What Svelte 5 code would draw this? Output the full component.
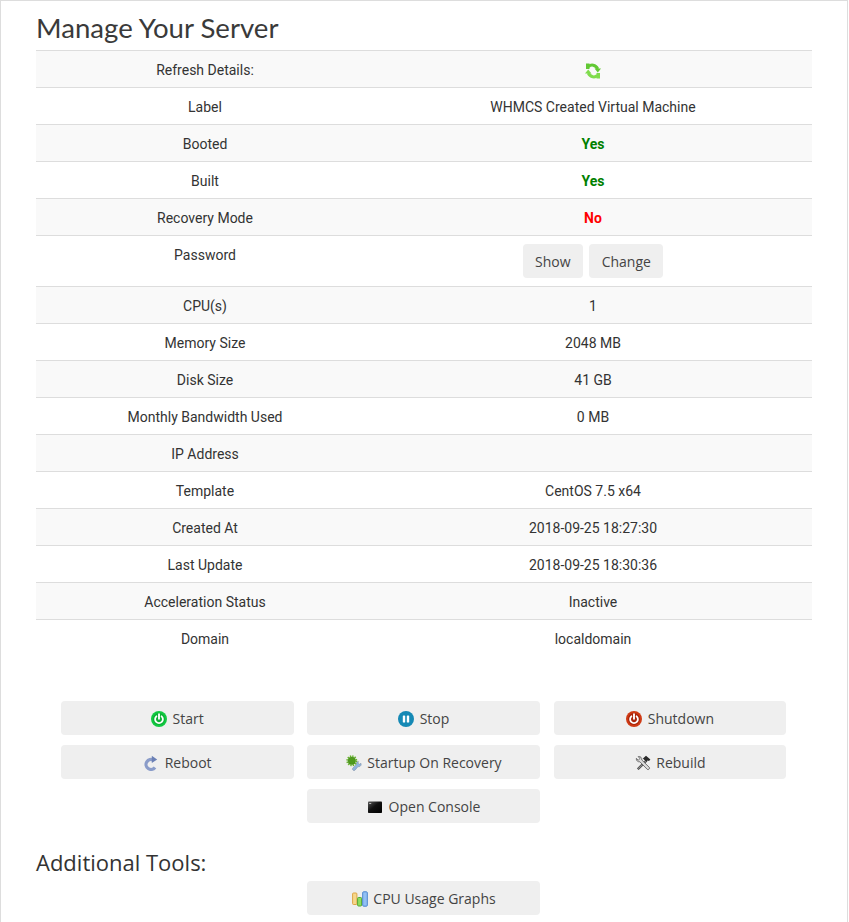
<script>
  const rows = [
    { label: 'Refresh Details:', icon: true },
    { label: 'Label', value: 'WHMCS Created Virtual Machine' },
    { label: 'Booted', value: 'Yes', tone: 'yes' },
    { label: 'Built', value: 'Yes', tone: 'yes' },
    { label: 'Recovery Mode', value: 'No', tone: 'no' },
    { label: 'Password', password: true },
    { label: 'CPU(s)', value: '1' },
    { label: 'Memory Size', value: '2048 MB' },
    { label: 'Disk Size', value: '41 GB' },
    { label: 'Monthly Bandwidth Used', value: '0 MB' },
    { label: 'IP Address', value: '' },
    { label: 'Template', value: 'CentOS 7.5 x64' },
    { label: 'Created At', value: '2018-09-25 18:27:30' },
    { label: 'Last Update', value: '2018-09-25 18:30:36' },
    { label: 'Acceleration Status', value: 'Inactive' },
    { label: 'Domain', value: 'localdomain' }
  ];
</script>

{#snippet power(outer, inner)}
  <svg class="ico" viewBox="0 0 16 16" aria-hidden="true">
    <circle cx="8" cy="8" r="8" fill={outer} />
    <circle cx="8" cy="8" r="6" fill={inner} />
    <path d="M5.400 5.300a3.900 3.900 0 1 0 5.200 0" fill="none" stroke="#fff" stroke-width="1.800" stroke-linecap="round" />
    <path d="M8 3.200v4.600" fill="none" stroke="#fff" stroke-width="1.900" stroke-linecap="round" />
  </svg>
{/snippet}

{#snippet refreshArrow(color)}
  <rect x="1" y=".5" width="3.500" height="5.500" fill={color} />
  <path d="M3.500 3.600C6 1.200 10.500 1.500 12.800 6" fill="none" stroke={color} stroke-width="3" />
  <path d="M16 5.500H9.500l3.300 4z" fill={color} />
{/snippet}

<div class="page">
  <h1>Manage Your Server</h1>

  <table>
    <colgroup>
      <col class="col-label" />
      <col />
    </colgroup>
    <tbody>
      {#each rows as row}
        <tr>
          <td>{row.label}</td>
          <td class:pass={row.password}>
            {#if row.icon}
              <svg class="refresh" viewBox="0 0 16 16" aria-hidden="true">
                {@render refreshArrow('#62c934')}
                <g transform="rotate(180 8 8)">
                  {@render refreshArrow('#7fdc4c')}
                </g>
              </svg>
            {:else if row.password}
              <div class="pass-actions">
                <button>Show</button>
                <button>Change</button>
              </div>
            {:else if row.tone}
              <strong class={row.tone}>{row.value}</strong>
            {:else}
              {row.value}
            {/if}
          </td>
        </tr>
      {/each}
    </tbody>
  </table>

  <div class="actions">
    <button>{@render power('#12c941', '#0bb035')} Start</button>
    <button>
      <svg class="ico" viewBox="0 0 16 16" aria-hidden="true">
        <circle cx="8" cy="8" r="8" fill="#1589b5" />
        <rect x="4.800" y="4.400" width="2.400" height="7.200" rx=".7" fill="#fff" />
        <rect x="8.800" y="4.400" width="2.400" height="7.200" rx=".7" fill="#fff" />
      </svg>
      Stop
    </button>
    <button>{@render power('#cf3a14', '#a8240a')} Shutdown</button>

    <button>
      <svg class="ico" viewBox="0 0 16 16" aria-hidden="true">
        <path d="M10.500 5.100A5 5 0 1 0 12 12.500" fill="none" stroke="#8a9cc9" stroke-width="3.200" />
        <path d="M8.800 .8l5.400 3.600-5.400 3.600z" fill="#6b80b5" />
      </svg>
      Reboot
    </button>
    <button>
      <svg class="ico" viewBox="0 0 16 16" aria-hidden="true">
        <path d="M6.500 13.500l3.800-4.300.2-1.800 1.900-1.100-.3 1.900 1.200 1 1.700-.9.200 1.800-1.400 1.500-1.900.2-2.900 3.400c-1.100 1-3.200-.4-2.500-1.700z" fill="#8fb4e0" stroke="#7d8a9c" stroke-width=".5" />
        <circle cx="5.800" cy="5.800" r="3.800" fill="#4f9a1d" stroke="#3d7a14" stroke-width=".5" />
        <circle cx="5.800" cy="5.800" r="4.600" fill="none" stroke="#63b327" stroke-width="1.800" stroke-dasharray="1.300 1.100" />
      </svg>
      Startup On Recovery
    </button>
    <button>
      <svg class="ico" viewBox="0 0 16 16" aria-hidden="true">
        <path d="M2.800 13l7.700-7.800 1.300 1.300-7.800 7.700c-.7.700-1.900-.4-1.200-1.200z" fill="#8d8d8d" stroke="#2e2e2e" stroke-width=".8" />
        <path d="M7.900 3.400L11 .8l4.400 3.700-1.400 1.600-1.400-.6-1.300 1.300z" fill="#2a2a2a" />
        <path d="M12.300 14.400L4.900 6.800C3 7.200 1 5.600 1.300 3.400l2 1.700L5 3.500 3.200 1.600C5.400 1 7.300 3 6.800 5l7.500 7.300c1 1-.9 3-2 2.100z" fill="#dcdcdc" stroke="#444" stroke-width=".7" />
      </svg>
      Rebuild
    </button>

    <button class="col2">
      <svg class="ico" viewBox="0 0 16 16" aria-hidden="true">
        <defs>
          <linearGradient id="console-bg" x1="0" y1="0" x2="1" y2="1">
            <stop offset="0" stop-color="#5a5a5a" />
            <stop offset=".45" stop-color="#111" />
            <stop offset="1" stop-color="#000" />
          </linearGradient>
        </defs>
        <rect x="1" y="2.500" width="14" height="11.500" rx=".8" fill="url(#console-bg)" />
        <rect x="2.200" y="4" width="2" height=".8" fill="#ddd" />
      </svg>
      Open Console
    </button>
  </div>

  <h2>Additional Tools:</h2>

  <div class="actions">
    <button class="col2">
      <svg class="ico" viewBox="0 0 16 16" aria-hidden="true">
        <rect x=".6" y="2" width="4.300" height="11.500" rx=".9" fill="#f6d78c" stroke="#dda545" />
        <rect x="5.600" y="6.500" width="4" height="8.500" rx=".9" fill="#8ede60" stroke="#55a832" />
        <rect x="10.700" y=".8" width="4.600" height="14.400" rx=".9" fill="#93c0f4" stroke="#4a85cf" />
      </svg>
      CPU Usage Graphs
    </button>
  </div>
</div>

<style>
  :global(body) {
    margin: 0;
    background: #fff;
  }

  .page {
    box-sizing: border-box;
    width: 848px;
    height: 922px;
    overflow: hidden;
    padding: 0 35px;
    border: 1px solid #ddd;
    border-bottom: none;
    font-family: Roboto, sans-serif;
    font-size: 14px;
    color: #333;
  }

  h1 {
    margin: 0;
    height: 49px;
    line-height: 54px;
    font-family: Lato, sans-serif;
    font-size: 27.6px;
    font-weight: 400;
    color: #3a3a3a;
  }

  table {
    width: 776px;
    table-layout: fixed;
    border-collapse: collapse;
    border-top: 1px solid #ddd;
  }

  .col-label {
    width: 338px;
  }

  tr:nth-child(odd) {
    background: #f9f9f9;
  }

  td {
    height: 36px;
    padding: 9px 8px 7px;
    box-sizing: border-box;
    border-top: 1px solid #ddd;
    text-align: center;
    vertical-align: top;
    line-height: 20px;
  }

  tr:first-child td {
    border-top: none;
  }

  td.pass {
    padding: 8px;
  }

  .refresh {
    display: block;
    width: 16px;
    height: 16px;
    margin: 3px auto 0;
  }

  strong {
    font-weight: 700;
  }

  .yes {
    color: #008000;
  }

  .no {
    color: #f00;
  }

  .pass-actions {
    display: flex;
    justify-content: center;
    gap: 6px;
    height: 34px;
  }

  .pass-actions button {
    padding: 0 12.5px;
  }

  button {
    height: 34px;
    padding: 0;
    border: none;
    border-radius: 4px;
    background: #efefef;
    font-family: "Open Sans", sans-serif;
    font-size: 14px;
    color: #444;
  }

  .actions {
    display: grid;
    grid-template-columns: repeat(3, 232.6px);
    column-gap: 13.8px;
    row-gap: 10px;
    margin-left: 25px;
  }

  table + .actions {
    margin-top: 45px;
  }

  .col2 {
    grid-column: 2;
  }

  .ico {
    width: 16px;
    height: 16px;
    vertical-align: -3px;
    margin-right: 2px;
  }

  h2 {
    margin: 0;
    padding-top: 23px;
    height: 35px;
    line-height: 32px;
    font-family: "Open Sans", sans-serif;
    font-size: 22px;
    font-weight: 400;
    color: #333;
  }
</style>
